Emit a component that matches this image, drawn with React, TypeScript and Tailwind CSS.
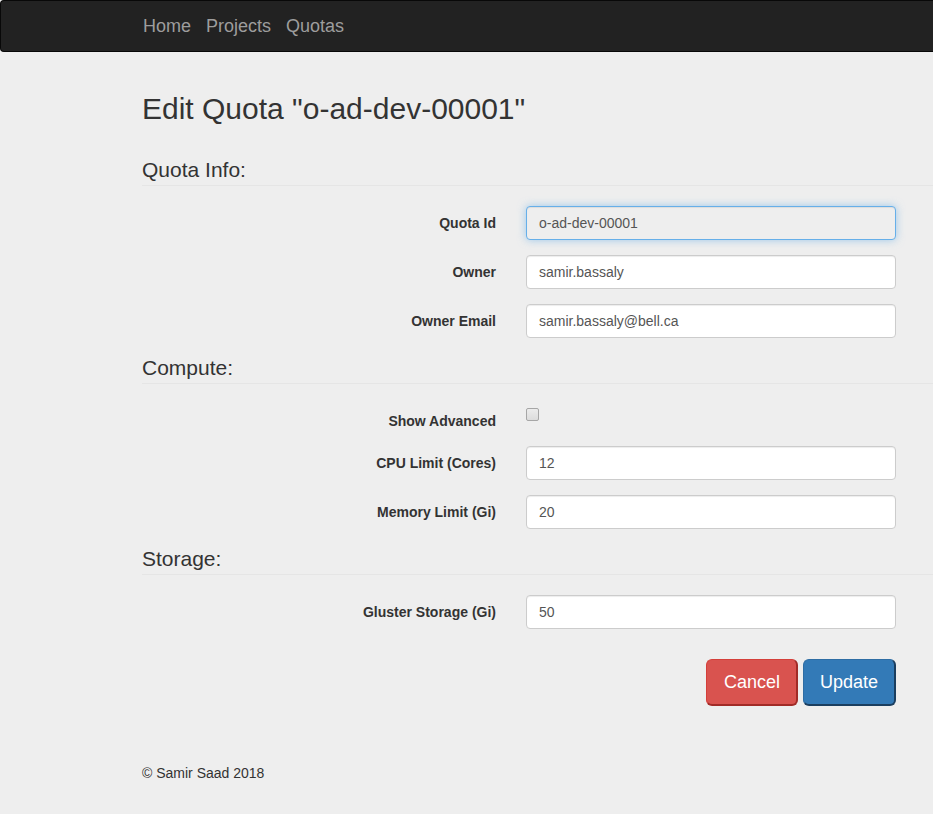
import React from "react";

const font = { fontFamily: '"Liberation Sans", Arial, Helvetica, sans-serif' };

function Row({ label, value, focus }: { label: string; value: string; focus?: boolean }) {
  return (
    <div className="flex mb-[15px]">
      <label className="w-[354px] text-right font-bold text-[14px] leading-[20px] pt-[7px] text-[#333]">{label}</label>
      <div
        className={
          "ml-[30px] w-[370px] h-[34px] rounded-[4px] border px-[12px] py-[6px] text-[14px] leading-[20px] text-[#555] " +
          (focus
            ? "bg-[#eeeeee] border-[#66afe9] shadow-[inset_0_1px_1px_rgba(0,0,0,0.075),0_0_8px_rgba(102,175,233,0.6)]"
            : "bg-white border-[#cccccc] shadow-[inset_0_1px_1px_rgba(0,0,0,0.075)]")
        }
      >
        {value}
      </div>
    </div>
  );
}

function Legend({ children, first }: { children: React.ReactNode; first?: boolean }) {
  return (
    <div
      className={
        "text-[21px] leading-[30px] text-[#333] border-b border-[#e5e5e5] mb-[20px] " + (first ? "mt-[30px]" : "")
      }
    >
      {children}
    </div>
  );
}

export default function App() {
  return (
    <div className="min-h-[814px] bg-[#eeeeee] text-[#333] text-[14px] leading-[20px]" style={font}>
      <nav className="h-[52px] bg-[#222222] border-y border-l border-[#080808] rounded-l-[4px] flex items-center pl-[142px] gap-[15px] text-[18px] text-[#9d9d9d]">
        <span>Home</span>
        <span>Projects</span>
        <span>Quotas</span>
      </nav>
      <div className="pl-[142px] pt-[20px]">
        <h2 className="text-[30px] leading-[33px] mt-[20px] mb-[10px] text-[#333]">Edit Quota "o-ad-dev-00001"</h2>
        <Legend first>Quota Info:</Legend>
        <Row label="Quota Id" value="o-ad-dev-00001" focus />
        <Row label="Owner" value="samir.bassaly" />
        <Row label="Owner Email" value="samir.bassaly@bell.ca" />
        <Legend>Compute:</Legend>
        <div className="flex mb-[15px]">
          <label className="w-[354px] text-right font-bold text-[14px] leading-[20px] pt-[7px] text-[#333]">Show Advanced</label>
          <div className="ml-[30px] pt-[4px]">
            <div className="w-[13px] h-[13px] rounded-[2px] border border-[#a6a6a6] bg-gradient-to-b from-[#ececec] to-[#dcdcdc]" />
          </div>
        </div>
        <Row label="CPU Limit (Cores)" value="12" />
        <Row label="Memory Limit (Gi)" value="20" />
        <Legend>Storage:</Legend>
        <Row label="Gluster Storage (Gi)" value="50" />
        <div className="flex justify-end w-[754px] gap-[5px] mt-[30px]">
          <button className="h-[47px] pl-[17px] pr-[16px] text-[18px] leading-[24px] text-white bg-[#d9534f] border border-[#d43f3a] border-r-2 border-b-2 border-r-[#a12b27] border-b-[#a12b27] rounded-[6px]">
            Cancel
          </button>
          <button className="h-[47px] px-[16px] text-[18px] leading-[24px] text-white bg-[#337ab7] border border-[#2e6da4] border-r-2 border-b-2 border-r-[#1b3e5f] border-b-[#1b3e5f] rounded-[6px]">
            Update
          </button>
        </div>
        <footer className="mt-[57px] text-[14px] leading-[20px] text-[#333]">© Samir Saad 2018</footer>
      </div>
    </div>
  );
}
